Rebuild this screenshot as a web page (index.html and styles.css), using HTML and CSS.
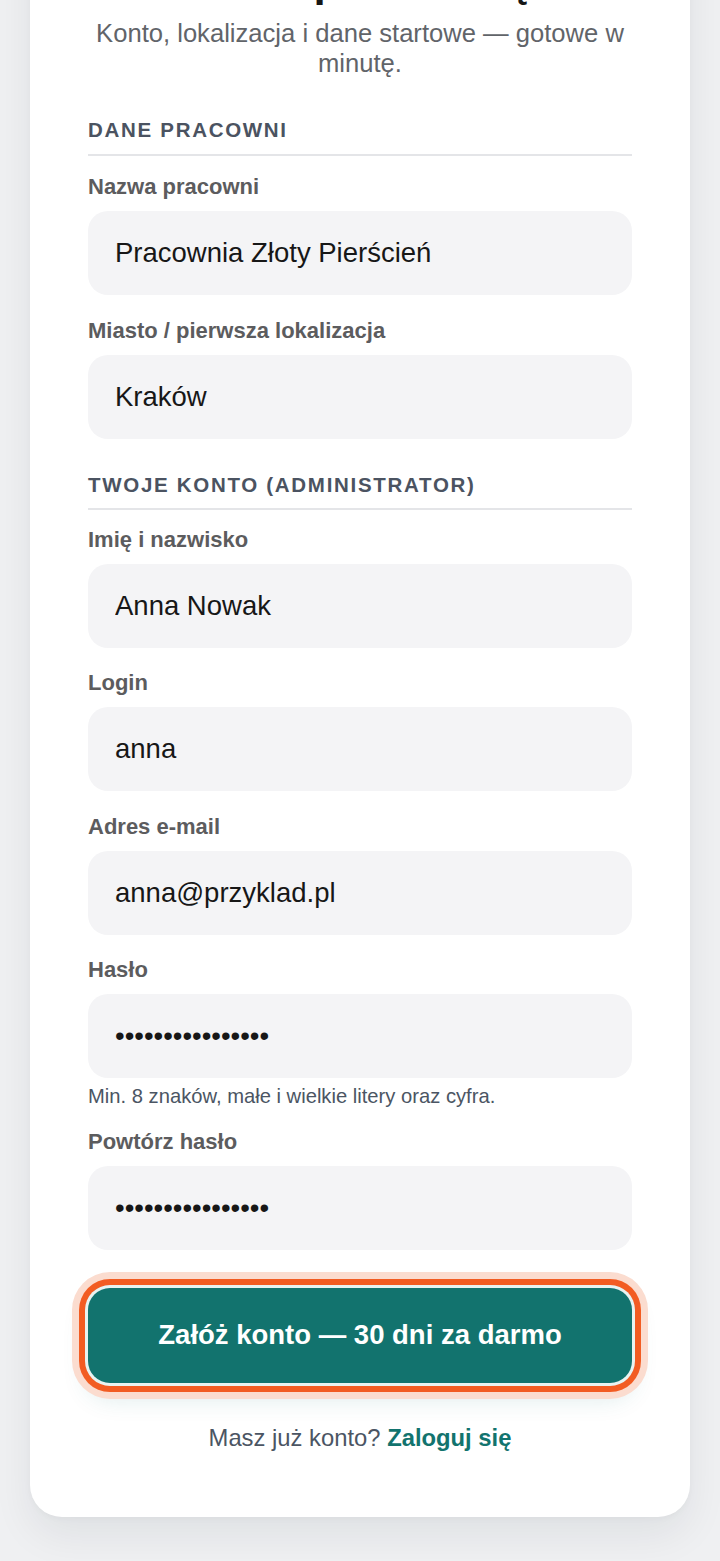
FILE: index.html
```html
<!DOCTYPE html>
<html lang="pl">
<head>
<meta charset="utf-8">
<meta name="viewport" content="width=device-width, initial-scale=1">
<title>Załóż pracownię</title>
<link rel="stylesheet" href="styles.css">
</head>
<body>
<main class="page">
  <section class="card">
    <h1 class="title">Załóż pracownię</h1>
    <p class="subtitle">Konto, lokalizacja i dane startowe — gotowe w minutę.</p>

    <form class="form" onsubmit="return false;">
      <fieldset class="section">
        <h2 class="section-title">Dane pracowni</h2>
        <div class="field">
          <label class="label" for="f-name">Nazwa pracowni</label>
          <input class="input" id="f-name" type="text" value="Pracownia Złoty Pierścień">
        </div>
        <div class="field">
          <label class="label" for="f-city">Miasto / pierwsza lokalizacja</label>
          <input class="input" id="f-city" type="text" value="Kraków">
        </div>
      </fieldset>

      <fieldset class="section">
        <h2 class="section-title">Twoje konto (administrator)</h2>
        <div class="field">
          <label class="label" for="f-full">Imię i nazwisko</label>
          <input class="input" id="f-full" type="text" value="Anna Nowak">
        </div>
        <div class="field">
          <label class="label" for="f-login">Login</label>
          <input class="input" id="f-login" type="text" value="anna">
        </div>
        <div class="field">
          <label class="label" for="f-mail">Adres e-mail</label>
          <input class="input" id="f-mail" type="email" value="anna@przyklad.pl">
        </div>
        <div class="field">
          <label class="label" for="f-pass">Hasło</label>
          <input class="input" id="f-pass" type="password" value="Abcdefgh12345678">
          <p class="hint">Min. 8 znaków, małe i wielkie litery oraz cyfra.</p>
        </div>
        <div class="field">
          <label class="label" for="f-pass2">Powtórz hasło</label>
          <input class="input" id="f-pass2" type="password" value="Abcdefgh12345678">
        </div>
      </fieldset>

      <button class="submit" type="submit">Załóż konto — 30 dni za darmo</button>
    </form>

    <p class="footer">Masz już konto? <a class="link" href="#">Zaloguj się</a></p>
  </section>
</main>
</body>
</html>
```

FILE: styles.css
```css
* {
  box-sizing: border-box;
}

html, body {
  margin: 0;
  padding: 0;
}

body {
  background: #eff0f2;
  font-family: "Liberation Sans", Arial, sans-serif;
  color: #1a1a1a;
}

.page {
  padding: 0 30px 60px;
}

.card {
  margin-top: -103px;
  background: #ffffff;
  border-radius: 32px;
  padding: 58px 58px 63px;
  box-shadow: 0 18px 40px rgba(17, 24, 39, 0.07), 0 2px 6px rgba(17, 24, 39, 0.03);
}

.title {
  margin: 0;
  font-size: 44px;
  line-height: 52.8px;
  font-weight: 700;
  text-align: center;
  color: #161616;
}

.subtitle {
  margin: 10px 0 0;
  font-size: 25.6px;
  line-height: 30px;
  text-align: center;
  color: #616469;
}

.form {
  margin: 0;
}

.section {
  margin: 40px 0 0;
  padding: 0;
  border: 0;
  min-width: 0;
}

.section + .section {
  margin-top: 34px;
}

.section-title {
  margin: 0 0 18px;
  padding-bottom: 12px;
  border-bottom: 2px solid #e4e5e8;
  font-size: 20.5px;
  line-height: 24px;
  font-weight: 700;
  letter-spacing: 1.7px;
  text-transform: uppercase;
  color: #4b5361;
}

.section + .section .section-title {
  margin-bottom: 17px;
  padding-bottom: 11px;
}

.field {
  display: flex;
  flex-direction: column;
}

.field + .field {
  margin-top: 23px;
}

.section + .section .field + .field {
  margin-top: 22.4px;
}

.label {
  margin-bottom: 11px;
  font-size: 22px;
  line-height: 26px;
  font-weight: 700;
  color: #5c5c5e;
}

.input {
  display: block;
  width: 100%;
  height: 84px;
  padding: 0 27px;
  border: 0;
  border-radius: 20px;
  background: #f4f4f6;
  font-family: "Liberation Sans", Arial, sans-serif;
  font-size: 27.5px;
  color: #171717;
  outline: none;
}

.hint {
  margin: 7px 0 0;
  font-size: 20.2px;
  line-height: 22px;
  color: #4b5563;
}

.submit {
  display: block;
  width: 100%;
  height: 95px;
  margin-top: 37.5px;
  border: 0;
  border-radius: 22px;
  background: #12736e;
  color: #ffffff;
  font-family: "Liberation Sans", Arial, sans-serif;
  font-size: 27.5px;
  font-weight: 700;
  cursor: pointer;
  box-shadow:
    0 0 0 3px #e8f3f1,
    0 0 0 9px #f25c22,
    0 0 0 16px #fbdccf,
    0 14px 26px rgba(18, 115, 110, 0.16);
}

.footer {
  margin: 38px 0 0;
  font-size: 23.8px;
  line-height: 33px;
  text-align: center;
  color: #4b5563;
}

.link {
  color: #12736e;
  font-weight: 700;
  text-decoration: none;
}
```
